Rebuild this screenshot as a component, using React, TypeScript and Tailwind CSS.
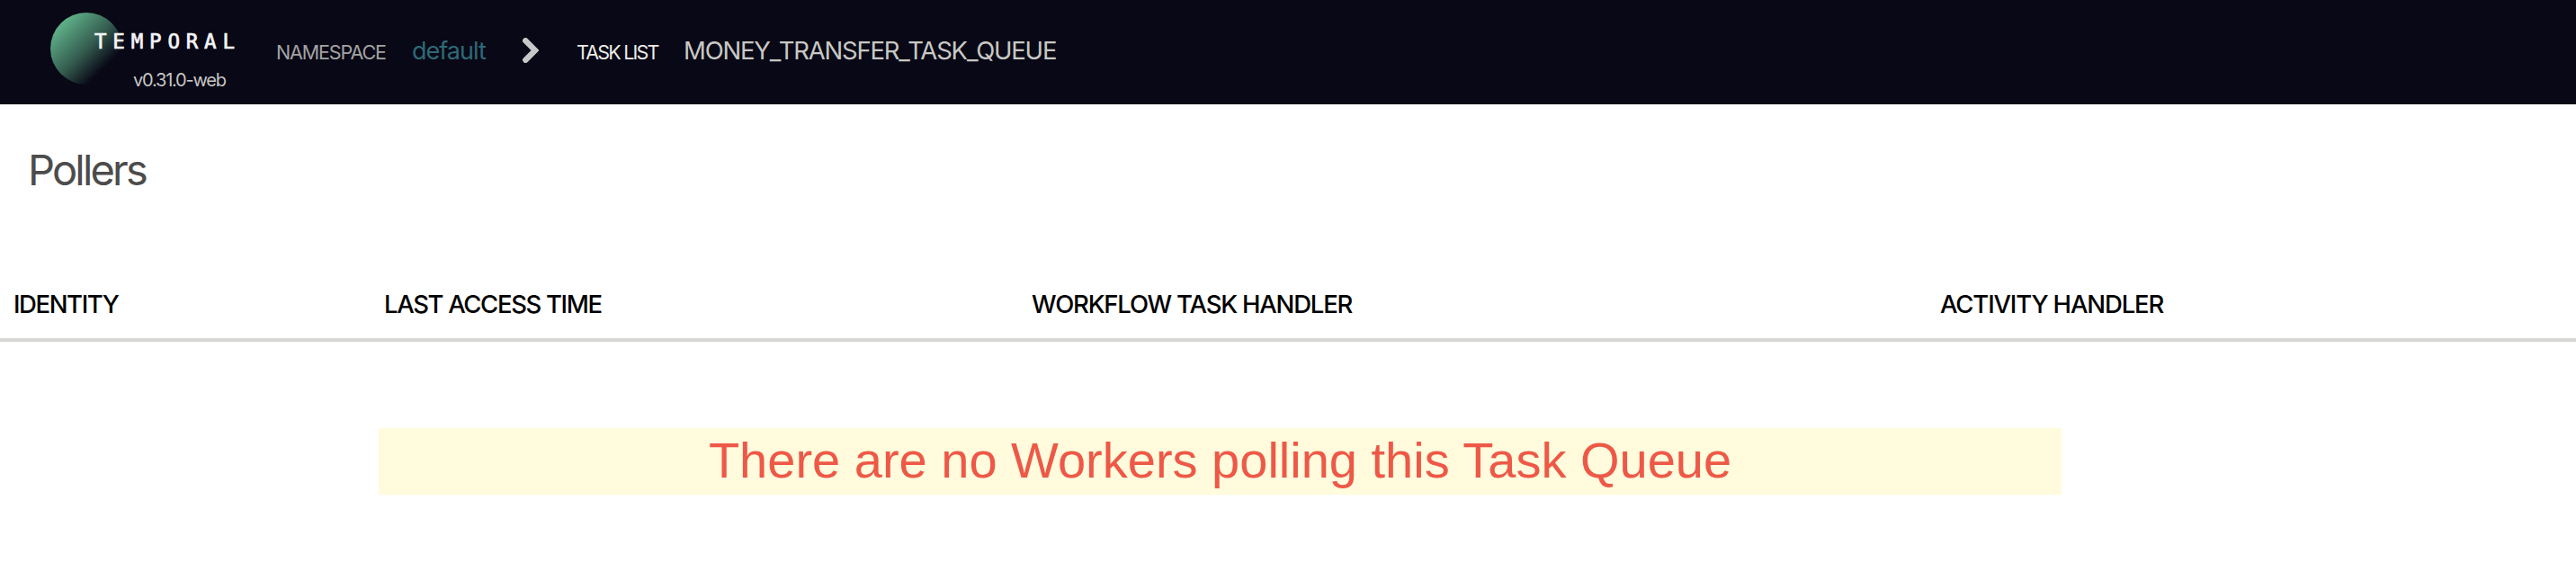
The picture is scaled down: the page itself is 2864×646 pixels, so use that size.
import React from "react";

const columns = [
  { label: "IDENTITY", className: "w-[411px] pl-[15px] tracking-[-1.4px]" },
  { label: "LAST ACCESS TIME", className: "w-[720px] pl-4 tracking-[-1.36px]" },
  { label: "WORKFLOW TASK HANDLER", className: "w-[1010px] pl-4 tracking-[-1.2px]" },
  { label: "ACTIVITY HANDLER", className: "flex-1 pl-4 tracking-[-1.15px]" },
];

function Logo() {
  return (
    <div className="relative h-full w-[307px] shrink-0 pt-[14px] pl-14">
      <svg width="80" height="80" viewBox="0 0 80 80" className="block">
        <defs>
          <linearGradient id="orb" x1="0" y1="0" x2="1" y2="1">
            <stop offset="0.12" stopColor="#63b88e" />
            <stop offset="0.5" stopColor="#63b88e" stopOpacity="0.48" />
            <stop offset="0.76" stopColor="#63b88e" stopOpacity="0" />
          </linearGradient>
        </defs>
        <circle cx="40" cy="40" r="40" fill="url(#orb)" />
      </svg>
      <span className="absolute top-[34px] left-[105px] font-['DejaVu_Sans_Mono',monospace] text-[22.5px] leading-6 tracking-[6.8px] text-[#f4f4f6] [-webkit-text-stroke:0.7px_#f4f4f6]">
        TEMPORAL
      </span>
      <span className="absolute top-[79px] left-[148px] text-[20px] leading-5 tracking-[-1.2px] text-[#c6c6c4]">
        v0.31.0-web
      </span>
    </div>
  );
}

function Header() {
  return (
    <header className="flex h-[116px] bg-[#090816]">
      <Logo />
      <nav className="flex h-28 items-baseline leading-[112px] whitespace-nowrap">
        <span className="w-[151px] text-[21.5px] tracking-[-1.14px] text-[#a3a3a3]">NAMESPACE</span>
        <a className="w-[123px] text-[27px] tracking-[-1px] text-[#2d6a76]">default</a>
        <svg width="18" height="28" viewBox="0 0 18 28" className="mr-[42px] self-center" fill="none">
          <path
            d="M3.3 3.3 L14 14 L3.3 24.7"
            stroke="#c8c8c8"
            strokeWidth="6.4"
            strokeLinecap="round"
            strokeLinejoin="miter"
          />
        </svg>
        <span className="w-[119px] text-[21.5px] tracking-[-1.8px] text-[#ecece8]">TASK LIST</span>
        <span className="text-[27.5px] tracking-[-1.19px] text-[#c8c8c4]">MONEY_TRANSFER_TASK_QUEUE</span>
      </nav>
    </header>
  );
}

export default function App() {
  return (
    <div className="h-[646px] w-[2864px] overflow-hidden bg-white font-[Inter,sans-serif]">
      <Header />
      <main>
        <h1 className="pt-[45px] pl-[31px] text-[47px] leading-[56px] tracking-[-2.8px] text-[#4c4c4c]">
          Pollers
        </h1>
        <div className="mt-[93px] flex h-[70px] border-b-4 border-[#d6d6d4] text-[27.5px] leading-[56px] font-medium whitespace-nowrap text-black">
          {columns.map((column) => (
            <div key={column.label} className={column.className}>
              {column.label}
            </div>
          ))}
        </div>
        <p className="mt-24 ml-[421px] h-[74px] w-[1871px] bg-[#fffbdc] text-center font-['Liberation_Sans',sans-serif] text-[56px] leading-[72px] text-[#ee5847]">
          There are no Workers polling this Task Queue
        </p>
      </main>
    </div>
  );
}
